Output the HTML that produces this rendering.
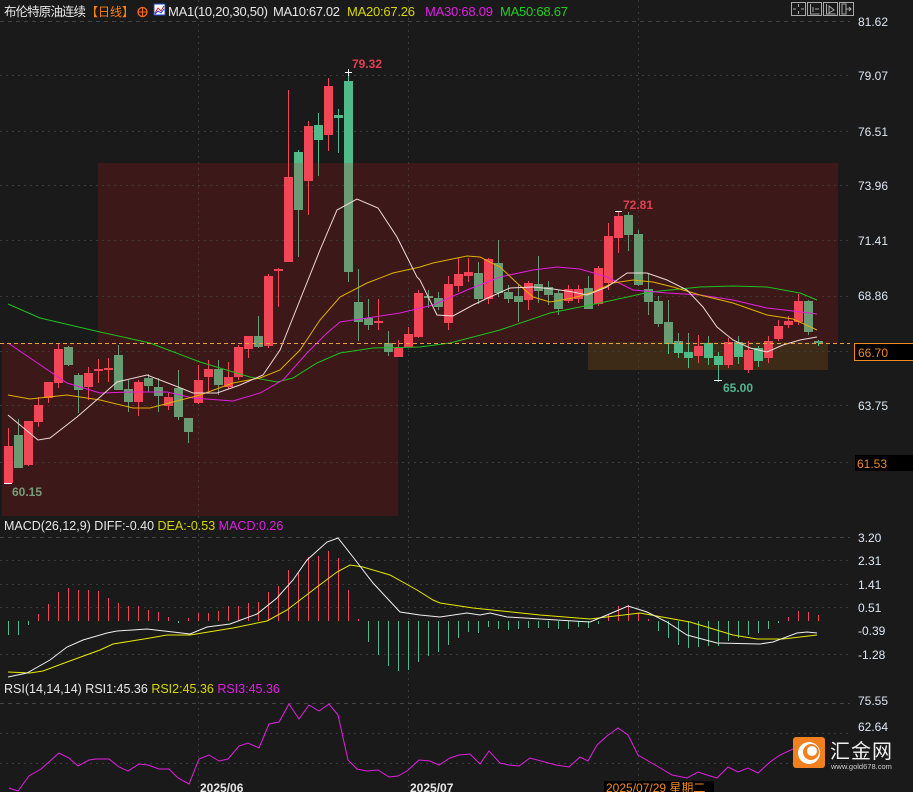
<!DOCTYPE html>
<html><head><meta charset="utf-8">
<style>
html,body{margin:0;padding:0;background:#1a1a1a;width:913px;height:792px;overflow:hidden;}
svg{display:block;font-family:"Liberation Sans","Noto Sans CJK SC",sans-serif;}
</style></head>
<body>
<svg id="s" width="913" height="792" viewBox="0 0 913 792" xmlns="http://www.w3.org/2000/svg">
<defs>
<clipPath id="ov"><rect x="98" y="163" width="740" height="180"/><rect x="2" y="343" width="396" height="173"/></clipPath>
</defs>
<rect width="913" height="792" fill="#1a1a1a"/>
<rect x="98" y="163" width="740" height="180" fill="#3c1818"/>
<rect x="2" y="343" width="396" height="173" fill="#3c1818"/>
<rect x="588" y="342" width="240" height="28" fill="#3d2b18"/>
<g stroke="#3a3a3a" stroke-width="1" stroke-dasharray="2,4">
<line x1="0" y1="21.5" x2="850" y2="21.5" stroke-dasharray="4,4" stroke="#444"/>
<line x1="0" y1="75.5" x2="850" y2="75.5"/>
<line x1="0" y1="131.5" x2="850" y2="131.5"/>
<line x1="0" y1="185.5" x2="850" y2="185.5"/>
<line x1="0" y1="240.5" x2="850" y2="240.5"/>
<line x1="0" y1="296.5" x2="850" y2="296.5"/>
<line x1="0" y1="351.5" x2="850" y2="351.5"/>
<line x1="0" y1="405.5" x2="850" y2="405.5"/>
<line x1="0" y1="462.5" x2="850" y2="462.5"/>
<line x1="198.5" y1="0" x2="198.5" y2="792"/>
<line x1="408.5" y1="0" x2="408.5" y2="792"/>
<line x1="638.5" y1="0" x2="638.5" y2="792"/>
<line x1="0" y1="537.5" x2="850" y2="537.5" stroke-dasharray="4,4" stroke="#444"/>
<line x1="0" y1="560.5" x2="850" y2="560.5"/>
<line x1="0" y1="584.5" x2="850" y2="584.5"/>
<line x1="0" y1="607.5" x2="850" y2="607.5"/>
<line x1="0" y1="654.5" x2="850" y2="654.5"/>
<line x1="0" y1="703.5" x2="850" y2="703.5" stroke-dasharray="4,4" stroke="#444"/>
<line x1="0" y1="733.5" x2="850" y2="733.5"/>
<line x1="0" y1="763.5" x2="850" y2="763.5"/>
</g>
<g id="candles"></g>
<g id="macdbars"></g>
<g fill="none" stroke-width="1">
<polyline stroke="#20c020" points="8,304 40,318 100,332 150,343 200,362 250,377 277,382 293,378 317,363 340,353 373,348 420,347 450,343 500,330 550,313 600,303 650,292 700,287 733,286 767,287 800,293 817,300"/>
<polyline stroke="#e020e0" points="8,343 33,360 67,383 100,393 133,392 167,392 193,398 233,401 260,393 283,380 307,353 327,333 340,322 367,318 400,313 433,305 467,290 500,277 533,270 557,267 580,269 607,277 633,290 667,293 700,295 733,300 767,308 793,311 817,314"/>
<polyline stroke="#e0b000" points="8,395 30,399 67,395 100,400 133,408 150,408 173,402 200,395 233,383 260,378 280,370 300,350 320,320 340,297 367,283 393,273 420,267 433,263 467,256 480,257 500,267 517,283 533,297 550,302 573,298 593,292 613,283 633,280 653,282 673,287 700,295 733,303 767,315 793,319 817,330"/>
<polyline stroke="#f0d8d8" points="8,415 38,440 50,438 77,417 100,397 117,382 147,375 173,385 193,393 217,393 240,385 263,375 280,350 300,300 320,250 337,210 357,199 378,208 397,237 417,277 420,280 437,315 453,316 473,305 490,297 510,288 533,287 553,289 573,292 587,295 607,287 627,273 647,273 667,280 687,290 703,307 717,327 733,340 750,348 767,352 783,345 800,340 817,337"/>
</g>
<line x1="0" y1="343.5" x2="850" y2="343.5" stroke="#e8a040" stroke-dasharray="4,3"/>
<g fill="#e04050" font-size="12" font-weight="bold">
<text x="352" y="68">79.32</text>
<text x="623" y="209">72.81</text>
</g>
<text x="723" y="392" fill="#50b890" font-size="12" font-weight="bold">65.00</text>
<text x="12" y="496" fill="#7a9c7a" font-size="12" font-weight="bold">60.15</text>
<g stroke="#fff" stroke-width="1">
<line x1="345" y1="72.5" x2="352" y2="72.5"/><line x1="348.5" y1="69" x2="348.5" y2="76"/>
<line x1="615" y1="211.5" x2="622" y2="211.5"/>
<line x1="714" y1="380.5" x2="722" y2="380.5"/>
<line x1="4" y1="483.5" x2="12" y2="483.5"/>
</g>
<g fill="none" stroke-width="1">
<polyline stroke="#e8e800" points="8,672 30,673 43,671 67,662 100,650 113,644 150,638 167,635 190,635 233,628 267,621 287,610 317,587 337,572 350,565 363,567 390,575 417,590 433,600 440,603 473,608 540,615 590,619 640,613 690,622 733,635 757,639 783,639 817,635"/>
<polyline stroke="#f0f0f0" points="8,677 27,673 50,660 67,647 83,640 107,633 117,631 147,629 173,632 190,634 207,627 230,624 257,614 277,598 293,580 307,560 327,542 338,538 353,557 373,583 400,612 420,615 440,617 467,613 480,615 490,613 507,617 557,620 590,622 607,615 628,606 647,612 667,622 687,635 717,643 760,644 773,642 797,633 807,632 817,633"/>
<polyline stroke="#e020e0" points="9,788 18,791 29,776 41,769 59,753 69,758 78,766 89,760 96,759 109,759 119,767 128,771 139,764 148,765 159,769 169,769 178,778 189,784 199,759 209,755 219,761 228,759 239,746 248,743 259,748 269,724 279,722 289,704 299,719 309,705 319,711 329,704 338,715 348,760 357,769 367,771 378,770 389,777 398,776 407,771 419,760 430,761 439,765 450,758 459,755 470,754 480,764 489,751 500,763 509,765 519,766 530,758 541,761 556,765 569,767 580,757 588,761 597,745 607,736 618,728 628,735 638,755 650,762 662,769 672,775 687,778 698,772 707,775 717,778 728,767 738,772 748,768 758,773 770,762 780,755 793,749"/>
</g>
<text x="4" y="16" font-size="12.5" fill="#e8e8e8" textLength="82">布伦特原油连续</text>
<text x="86" y="16" font-size="12" fill="#ff8010" textLength="48">【日线】</text>
<circle cx="142.5" cy="12" r="4.5" fill="none" stroke="#ff6a10" stroke-width="1.3"/>
<line x1="138" y1="12" x2="147" y2="12" stroke="#ff6a10"/><line x1="142.5" y1="7.5" x2="142.5" y2="16.5" stroke="#ff6a10"/>
<rect x="154" y="4" width="11" height="11" fill="#fff" stroke="#2040c0"/>
<polyline points="155,13 158,8 161,11 164,6" fill="none" stroke="#e02020"/>
<polyline points="155,14 158,11 161,13 164,9" fill="none" stroke="#2040ff"/>
<g font-size="13">
<text x="168" y="16" fill="#e8e8e8" textLength="100">MA1(10,20,30,50)</text>
<text x="273" y="16" fill="#e8e8e8" textLength="67">MA10:67.02</text>
<text x="347" y="16" fill="#d8d800" textLength="68">MA20:67.26</text>
<text x="425" y="16" fill="#e020e0" textLength="68">MA30:68.09</text>
<text x="500" y="16" fill="#20d020" textLength="68">MA50:68.67</text>
</g>
<g fill="none" stroke="#aaa" stroke-width="1">
<rect x="791.5" y="2.5" width="14" height="13"/><rect x="807.5" y="2.5" width="14" height="13"/><rect x="823.5" y="2.5" width="14" height="13"/><rect x="839.5" y="2.5" width="14" height="13"/>
<path d="M798.5 4v3M798.5 11v3M793 9h3M801 9h3"/>
<path d="M810.5 4v10h9M813 7v5M815 9h4"/>
<path d="M826.5 4v10h9M829 6l5 4-5 3z"/>
<path d="M842 4h4v10h-4zM846 9h5M849 7l2 2-2 2"/>
</g>
<g font-size="12" fill="#dde8f4">
<text x="858" y="26">81.62</text>
<text x="858" y="80">79.07</text>
<text x="858" y="136">76.51</text>
<text x="858" y="190">73.96</text>
<text x="858" y="245">71.41</text>
<text x="858" y="300">68.86</text>
<text x="858" y="410">63.75</text>
<text x="858" y="542">3.20</text>
<text x="858" y="565">2.31</text>
<text x="858" y="589">1.41</text>
<text x="858" y="612">0.51</text>
<text x="858" y="635">-0.39</text>
<text x="858" y="659">-1.28</text>
<text x="858" y="705">75.55</text>
<text x="858" y="731">62.64</text>
</g>
<rect x="854.5" y="343.5" width="60" height="17" fill="#000" stroke="#f08a20"/>
<text x="858" y="357" font-size="12" fill="#f08a20">66.70</text>
<rect x="855" y="455" width="58" height="16" fill="#000"/>
<text x="857" y="468" font-size="12" fill="#f08a20">61.53</text>
<text x="4" y="530" font-size="12.5" fill="#e8e8e8">MACD(26,12,9) DIFF:-0.40 <tspan fill="#d8d800">DEA:-0.53</tspan> <tspan fill="#e020e0">MACD:0.26</tspan></text>
<text x="4" y="693" font-size="12.5" fill="#e8e8e8">RSI(14,14,14) RSI1:45.36 <tspan fill="#d8d800">RSI2:45.36</tspan> <tspan fill="#e020e0">RSI3:45.36</tspan></text>
<text x="200" y="792" font-size="12" font-weight="bold" fill="#e8e8e8">2025/06</text>
<text x="410" y="792" font-size="12" font-weight="bold" fill="#e8e8e8">2025/07</text>
<rect x="604" y="781" width="110" height="11" fill="#000"/>
<text x="606" y="792" font-size="12" fill="#f08a20">2025/07/29 星期二</text>
<rect x="793" y="737" width="32" height="31" rx="3" fill="#f08020"/>
<circle cx="809" cy="753" r="11" fill="#fff"/>
<circle cx="811" cy="752" r="8" fill="#f08020"/>
<circle cx="812" cy="751" r="5" fill="#fff"/>
<text x="830" y="758" font-size="20" fill="#f0f0f0" font-family="Noto Sans CJK SC, sans-serif" letter-spacing="1">汇金网</text>
<text x="831" y="769" font-size="7.5" fill="#cfcfcf">www.gold678.com</text>
</svg>
<script>
var NS="http://www.w3.org/2000/svg";
var d=[
[8,'r',446,483,428,483],[18,'g',435,468,419,468],[28,'r',421,465,421,466],[38,'r',405,422,397,427],[48,'r',382,398,382,403],[58,'r',349,383,343,388],[68,'g',347,365,346,366],[78,'g',375,390,373,413],[88,'r',373,387,367,400],[98,'r',369,371,359,383],[108,'r',368,370,358,382],[118,'g',355,390,345,390],[128,'g',389,402,380,412],[138,'r',382,402,380,416],[148,'g',378,386,374,392],[158,'g',387,396,378,412],[168,'r',397,406,393,410],[178,'g',388,417,370,420],[188,'g',418,432,418,443],[198,'r',380,403,365,404],[208,'r',369,377,360,392],[218,'g',369,385,360,395],[228,'r',377,387,362,389],[238,'r',347,377,345,380],[248,'r',336,349,336,358],[258,'g',336,347,316,348],[268,'r',276,346,274,348],[278,'r',269,271,268,307],[288,'r',177,262,90,262],[298,'g',152,210,150,257],[308,'r',126,181,121,215],[318,'g',125,140,113,176],[328,'r',86,135,78,151],[338,'g',115,118,109,153],[348,'g',81,272,72,282],[358,'g',302,322,269,341],[368,'g',318,325,299,330],[378,'r',321,323,299,330],[388,'g',343,352,331,356],[398,'r',348,357,340,357],[408,'r',334,347,327,347],[418,'r',293,337,290,338],[428,'g',296,298,290,308],[438,'g',298,307,292,310],[448,'r',284,323,276,330],[458,'r',274,286,258,292],[468,'r',272,276,258,282],[478,'g',273,299,262,304],[488,'r',259,299,258,304],[498,'g',263,293,240,297],[508,'g',292,299,285,303],[518,'g',296,302,285,322],[528,'r',283,300,281,310],[538,'g',284,291,256,303],[548,'g',287,295,281,305],[558,'g',293,309,290,315],[568,'r',289,301,285,303],[578,'r',289,299,285,303],[588,'g',288,309,276,309],[598,'r',268,304,266,306],[608,'r',236,283,223,290],[618,'r',216,238,211,253],[628,'g',215,235,212,251],[638,'g',234,285,230,286],[648,'g',289,302,274,315],[658,'g',301,324,296,327],[668,'g',322,344,300,354],[678,'g',341,353,333,358],[688,'g',352,358,333,368],[698,'r',346,356,335,363],[708,'g',343,358,336,365],[718,'g',356,365,352,382],[728,'r',342,365,338,368],[738,'g',342,357,336,364],[748,'r',350,370,341,373],[758,'g',348,361,346,367],[768,'r',341,358,336,363],[778,'r',326,339,320,341],[788,'r',321,325,316,328],[798,'r',301,322,294,325],[808,'g',301,332,300,335],[818,'g',341,343,340,346]];
var g=document.getElementById('candles');
function el(t,a,p){var e=document.createElementNS(NS,t);for(var k in a)e.setAttribute(k,a[k]);(p||g).appendChild(e);return e;}
var muted=el('g',{'clip-path':'url(#ov)'});
d.forEach(function(c){
 var col=c[1]=='r'?'#f04656':'#4fbb88';
 el('line',{x1:c[0]+0.5,y1:c[4],x2:c[0]+0.5,y2:c[5],stroke:col});
 el('rect',{x:c[0]-4,y:c[2],width:9,height:Math.max(1,c[3]-c[2]),fill:col});
 if(c[1]=='g'){
  el('line',{x1:c[0]+0.5,y1:c[4],x2:c[0]+0.5,y2:c[5],stroke:'#6a9c74'},muted);
  el('rect',{x:c[0]-4,y:c[2],width:9,height:Math.max(1,c[3]-c[2]),fill:'#6a9c74'},muted);
 }
});
g.appendChild(muted);
var m=[[8,635],[18,635],[28,625],[38,614],[48,604],[58,592],[68,588],[78,590],[88,590],[98,591],[108,598],[118,603],[128,606],[138,606],[148,610],[158,612],[168,617],[178,623],[188,618],[198,613],[208,613],[218,611],[228,606],[238,606],[248,603],[258,602],[268,592],[278,586],[288,570],[298,573],[308,557],[318,556],[328,551],[338,558],[348,590],[358,619],[368,642],[378,655],[388,666],[398,671],[408,670],[418,662],[428,656],[438,652],[448,645],[458,638],[468,632],[478,633],[488,627],[498,629],[508,630],[518,629],[528,628],[538,628],[548,628],[558,629],[568,629],[578,627],[588,628],[598,624],[608,614],[618,606],[628,605],[638,613],[648,619],[658,631],[668,638],[678,645],[688,648],[698,647],[708,646],[718,646],[728,641],[738,638],[748,635],[758,633],[768,629],[778,623],[788,617],[798,611],[808,612],[818,615]];
var mb=document.getElementById('macdbars');
m.forEach(function(b){var z=621;var col=b[1]<z?'#f04656':'#4fbb88';
 el('line',{x1:b[0]+0.5,y1:z,x2:b[0]+0.5,y2:b[1],stroke:col},mb);});
</script>
</body></html>
